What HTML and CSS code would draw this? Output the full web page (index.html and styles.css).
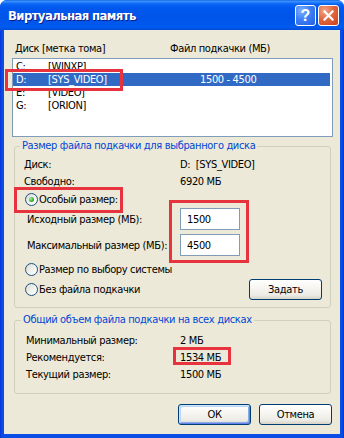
FILE: index.html
```html
<!DOCTYPE html>
<html>
<head>
<meta charset="utf-8">
<link rel="stylesheet" href="styles.css">
</head>
<body>
<div class="window">
  <div class="titlebar">
    <span class="title">Виртуальная память</span>
    <div class="tb-buttons">
      <div class="tb-btn help">?</div>
      <div class="tb-btn close">
        <svg width="11" height="11" viewBox="0 0 11 11"><path d="M1.5 1.5 L9.5 9.5 M9.5 1.5 L1.5 9.5" stroke="#fff" stroke-width="2.2" stroke-linecap="square"/></svg>
      </div>
    </div>
  </div>
  <div class="client">
    <div class="list-head">
      <span class="col-disk">Диск [метка тома]</span>
      <span class="col-file">Файл подкачки (МБ)</span>
    </div>
    <div class="listbox">
      <div class="row"><span>C:</span><span>[WINXP]</span><span></span></div>
      <div class="row sel"><span>D:</span><span>[SYS_VIDEO]</span><span>1500 - 4500</span></div>
      <div class="row"><span>E:</span><span>[VIDEO]</span><span></span></div>
      <div class="row"><span>G:</span><span>[ORION]</span><span></span></div>
    </div>

    <fieldset class="group g1">
      <legend>Размер файла подкачки для выбранного диска</legend>
      <div class="info">
        <span>Диск:</span><span>D:&nbsp; [SYS_VIDEO]</span>
        <span>Свободно:</span><span>6920 МБ</span>
      </div>
      <div class="radio-row first"><span class="radio on"></span><span>Особый размер:</span></div>
      <div class="field-row"><span class="flabel">Исходный размер (МБ):</span><span class="input">1500</span></div>
      <div class="field-row second"><span class="flabel">Максимальный размер (МБ):</span><span class="input">4500</span></div>
      <div class="radio-row sys"><span class="radio"></span><span>Размер по выбору системы</span></div>
      <div class="last-row">
        <div class="radio-row"><span class="radio"></span><span>Без файла подкачки</span></div>
        <div class="btn">Задать</div>
      </div>
    </fieldset>

    <fieldset class="group g2">
      <legend>Общий объем файла подкачки на всех дисках</legend>
      <div class="totals">
        <span>Минимальный размер:</span><span>2 МБ</span>
        <span>Рекомендуется:</span><span>1534 МБ</span>
        <span>Текущий размер:</span><span>1500 МБ</span>
      </div>
    </fieldset>

    <div class="dlg-buttons">
      <div class="btn default">ОК</div>
      <div class="btn">Отмена</div>
    </div>
  </div>

  <div class="mark m1"></div>
  <div class="mark m2"></div>
  <div class="mark m3"></div>
  <div class="mark m4"></div>
</div>
</body>
</html>
```

FILE: styles.css
```css
html, body {
  margin: 0;
  padding: 0;
  background: #ffffff;
}

.window {
  position: relative;
  width: 344px;
  height: 438px;
  box-sizing: border-box;
  background: linear-gradient(to right, #0831d9 0, #0a4de4 2px, #0a4de4 342px, #0831d9 344px);
  border-radius: 7px 7px 0 0;
  display: flex;
  flex-direction: column;
  font-family: "DejaVu Sans Condensed", "DejaVu Sans", sans-serif;
  font-stretch: condensed;
  font-size: 11px;
  letter-spacing: -0.35px;
  color: #000;
}

.titlebar {
  height: 30px;
  flex: none;
  border-radius: 7px 7px 0 0;
  background: linear-gradient(to bottom,
    #0a5bde 0px, #3d95ff 1px, #2e86ff 2px, #0a64f4 4px, #0058ee 8px,
    #0055e8 16px, #0056ea 22px, #005bf0 27px, #004bd6 30px);
  display: flex;
  align-items: center;
  justify-content: space-between;
  padding: 0 5px 0 8px;
  box-sizing: border-box;
}

.title {
  color: #fff;
  font-family: "DejaVu Sans Condensed", "DejaVu Sans", sans-serif;
  font-weight: bold;
  font-size: 13px;
  letter-spacing: -0.6px;
  text-shadow: 1px 1px 0 #0a1e8a;
  margin-top: 1px;
}

.tb-buttons {
  display: flex;
  gap: 2px;
  margin-top: 1px;
}

.tb-btn {
  width: 21px;
  height: 21px;
  box-sizing: border-box;
  border: 1px solid #fff;
  border-radius: 3px;
  display: flex;
  align-items: center;
  justify-content: center;
}

.tb-btn.help {
  background: radial-gradient(circle at 30% 25%, #7fb0ff 0%, #3d7ff5 45%, #2460e0 100%);
  color: #fff;
  font-family: "Liberation Sans", sans-serif;
  font-weight: bold;
  font-size: 16px;
  letter-spacing: 0;
  line-height: 1;
}

.tb-btn.close {
  background: radial-gradient(circle at 30% 25%, #f2a58a 0%, #e3683f 45%, #c8401c 100%);
}

.client {
  flex: none;
  height: 404px;
  margin: 0 4px;
  background: #ece9d8;
  box-sizing: border-box;
  padding: 0 7px 0 8px;
  display: flex;
  flex-direction: column;
}

.list-head {
  display: flex;
  margin-top: 12px;
  height: 13px;
  line-height: 13px;
  padding-left: 3px;
}

.col-disk {
  width: 155px;
}

.listbox {
  margin-top: 3px;
  height: 79px;
  box-sizing: border-box;
  border: 1px solid #7f9db9;
  background: #fff;
  padding-top: 1px;
}

.row {
  display: grid;
  grid-template-columns: 32px 152px 1fr;
  height: 13px;
  line-height: 13px;
  padding-left: 3px;
  margin-right: 2px;
}

.row.sel {
  background: #316ac5;
  color: #fff;
}

.group {
  margin: 0 2px;
  padding: 3px 8px 7px 9px;
  border: 1px solid #d0d0bf;
  border-radius: 3px;
  min-width: 0;
}

.group legend {
  color: #0046d5;
  padding: 0 2px;
  margin-left: -4px;
  line-height: 14px;
  height: 14px;
}

.g1 {
  margin-top: 2px;
}

.info {
  display: grid;
  grid-template-columns: 156px 1fr;
  grid-auto-rows: 17px;
  align-items: center;
}

.radio-row {
  display: flex;
  align-items: center;
  gap: 1px;
  height: 20px;
  padding-left: 1px;
}

.radio-row.first {
  height: 18px;
}

.radio {
  width: 13px;
  height: 13px;
  box-sizing: border-box;
  border-radius: 50%;
  border: 1px solid #1c5180;
  background: linear-gradient(135deg, #dcdcd4 0%, #f4f4f0 60%, #ffffff 100%);
  display: flex;
  align-items: center;
  justify-content: center;
  flex: none;
}

.radio.on::after {
  content: "";
  width: 5px;
  height: 5px;
  border-radius: 50%;
  background: radial-gradient(circle at 35% 35%, #a8f0a8 0%, #2fb52f 55%, #1a8a1a 100%);
}

.field-row {
  display: flex;
  align-items: center;
  height: 22px;
}

.field-row.second {
  margin-top: 4px;
}

.flabel {
  width: 153px;
  padding-left: 3px;
  white-space: nowrap;
}

.input {
  width: 60px;
  height: 22px;
  box-sizing: border-box;
  border: 1px solid #7f9db9;
  background: #fff;
  padding-left: 6px;
  display: flex;
  align-items: center;
}

.radio-row.sys {
  margin-top: 3px;
}

.last-row {
  display: flex;
  align-items: center;
  justify-content: space-between;
  height: 21px;
}

.btn {
  width: 73px;
  height: 21px;
  box-sizing: border-box;
  border: 1px solid #003c74;
  border-radius: 3px;
  background: linear-gradient(to bottom, #ffffff 0%, #f7f6f2 40%, #ecebe5 80%, #d8d2c6 100%);
  display: flex;
  align-items: center;
  justify-content: center;
}

.btn.default {
  box-shadow: inset 1px 1px 0 #cee7ff, inset -1px -1px 0 #6982ee, inset 2px 2px 0 #bcd4f6, inset -2px -2px 0 #89ade4;
}

.g2 {
  margin-top: 5px;
  padding: 5px 8px 10px 11px;
}

.g2 legend {
  margin-left: -5px;
}

.totals {
  display: grid;
  grid-template-columns: 154px 1fr;
  grid-auto-rows: 17px;
  align-items: center;
}

.dlg-buttons {
  display: flex;
  justify-content: flex-end;
  gap: 8px;
  margin-top: 10px;
  margin-right: 1px;
}

.mark {
  position: absolute;
  box-sizing: border-box;
  border: 3px solid #e6333d;
}

.m1 { left: 5px;   top: 69px;  width: 118px; height: 22px; }
.m2 { left: 14px;  top: 187px; width: 109px; height: 26px; }
.m3 { left: 169px; top: 200px; width: 80px;  height: 63px; }
.m4 { left: 173px; top: 347px; width: 58px;  height: 18px; }
```
